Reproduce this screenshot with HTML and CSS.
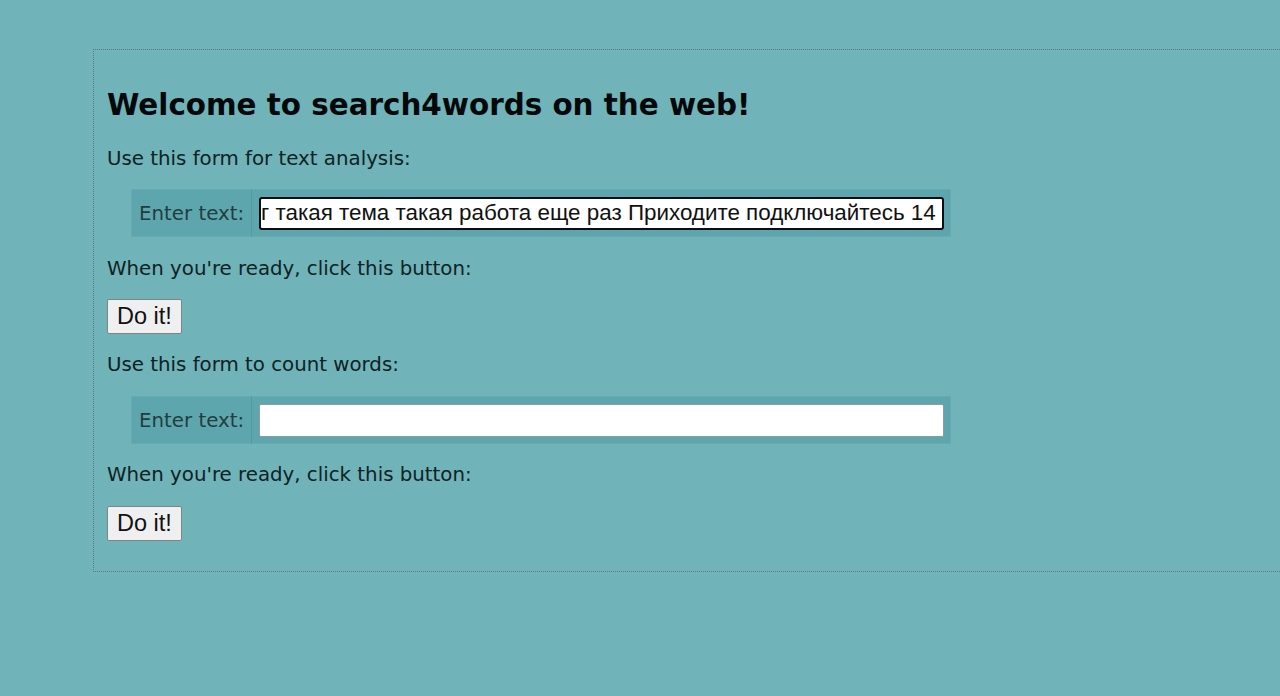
FILE: index.html
```html
<!DOCTYPE html>
<html lang="en">
<head>
<meta charset="utf-8">
<title>search4words</title>
<link rel="stylesheet" href="styles.css">
</head>
<body>
<div class="page">
  <h2 class="title">Welcome to search4words on the web!</h2>
  <form class="form">
    <p class="para">Use this form for text analysis:</p>
    <table class="fields">
      <tr>
        <td class="label">Enter text:</td>
        <td class="field"><input class="text-input focused" type="text" name="phrase" value="г такая тема такая работа еще раз Приходите подключайтесь 14"></td>
      </tr>
    </table>
    <p class="para">When you're ready, click this button:</p>
    <p class="para"><input class="btn" type="submit" value="Do it!"></p>
  </form>
  <form class="form">
    <p class="para">Use this form to count words:</p>
    <table class="fields">
      <tr>
        <td class="label">Enter text:</td>
        <td class="field"><input class="text-input" type="text" name="words" value=""></td>
      </tr>
    </table>
    <p class="para">When you're ready, click this button:</p>
    <p class="para"><input class="btn" type="submit" value="Do it!"></p>
  </form>
</div>
</body>
</html>
```
FILE: styles.css
```css
html {
  overflow: hidden;
  background: #70b3b9;
}
body {
  margin: 0;
  padding: 49px 0 0 93px;
  background: #70b3b9;
  font-family: "DejaVu Sans", Verdana, sans-serif;
  font-size: 19.8px;
  color: #0f2224;
}
.page {
  width: 1300px;
  border: 1px dotted #61787b;
  padding: 14px 12.25px 11.5px 13px;
}
.title {
  margin: 24.4px 0 24.4px 0;
  font-size: 29.4px;
  font-weight: bold;
  color: #050808;
}
.form {
  margin: 0;
}
.para {
  margin: 19.4px 0;
}
.fields {
  margin: 0 0 0 24px;
  border-collapse: collapse;
  background: #5ea6ad;
  border: 1px solid #67aab1;
}
.label {
  padding: 6px 7px 5px 7px;
  color: #223d41;
  border-right: 1px solid #5799a0;
  white-space: nowrap;
}
.field {
  padding: 7px 6px 6px 7px;
}
.text-input {
  display: block;
  box-sizing: border-box;
  width: 685px;
  height: 33px;
  margin: 0;
  padding: 1px 3px 2px 3px;
  font-family: "Liberation Sans", Arial, sans-serif;
  font-size: 22.4px;
  color: #111;
  background: #fff;
  border: 1px solid #8f9b9c;
  border-radius: 2px;
  outline: none;
}
.focused {
  border: 2px solid #0d0d0d;
  border-radius: 3px;
  padding-left: 0;
}
.btn {
  box-sizing: border-box;
  height: 35px;
  margin: 0;
  padding: 0 9px;
  font-family: "Liberation Sans", Arial, sans-serif;
  font-size: 23.5px;
  color: #111;
  background: #efefef;
  border: 1px solid #7d8586;
  border-radius: 2px;
  vertical-align: top;
}
```
